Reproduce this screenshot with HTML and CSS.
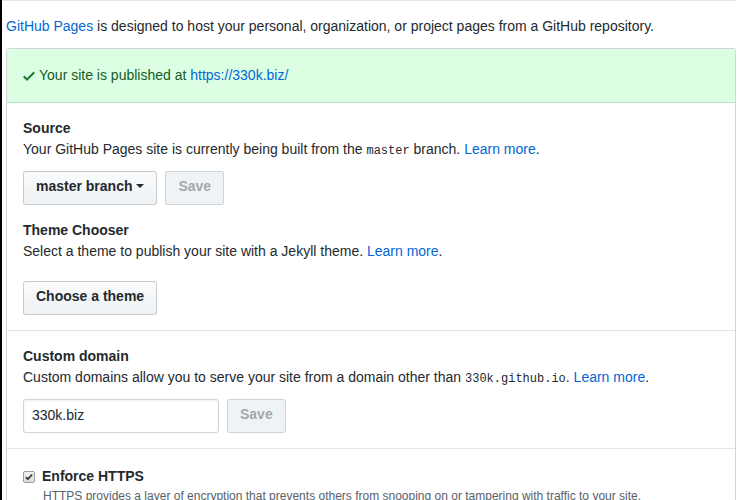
FILE: index.html
```html
<!DOCTYPE html>
<html lang="en">
<head>
<meta charset="utf-8">
<title>GitHub Pages</title>
<link rel="stylesheet" href="styles.css">
</head>
<body>
<div class="frame">
  <div class="wrap">
    <div class="topline"></div>
    <div class="main">
      <p class="intro"><a href="#">GitHub Pages</a> is designed to host your personal, organization, or project pages from a GitHub repository.</p>
      <div class="box">
        <div class="flash">
          <svg class="check" viewBox="0 0 12 16" width="12" height="16" aria-hidden="true"><path d="M12 5l-8 8-4-4 1.5-1.5L4 10l6.5-6.5L12 5z"/></svg>
          <span>Your site is published at <a href="#">https://330k.biz/</a></span>
        </div>
        <div class="row">
          <h3 class="heading">Source</h3>
          <p class="desc">Your GitHub Pages site is currently being built from the <code>master</code> branch. <a href="#">Learn more</a>.</p>
          <div class="actions">
            <button class="btn">master branch <span class="caret"></span></button>
            <button class="btn" disabled>Save</button>
          </div>
          <h3 class="heading heading-next">Theme Chooser</h3>
          <p class="desc">Select a theme to publish your site with a Jekyll theme. <a href="#">Learn more</a>.</p>
          <div class="actions actions-theme">
            <button class="btn">Choose a theme</button>
          </div>
        </div>
        <div class="row">
          <h3 class="heading">Custom domain</h3>
          <p class="desc">Custom domains allow you to serve your site from a domain other than <code>330k.github.io</code>. <a href="#">Learn more</a>.</p>
          <div class="actions">
            <input class="input" type="text" value="330k.biz">
            <button class="btn" disabled>Save</button>
          </div>
        </div>
        <div class="row row-last">
          <label class="check-line">
            <span class="checkbox"><svg viewBox="0 0 12 12" width="10" height="10" aria-hidden="true"><path d="M2.2 6.2l2.4 2.4 5.2-5.6" fill="none" stroke="#3b3b3b" stroke-width="2.2"/></svg></span>
            <span class="check-label">Enforce HTTPS</span>
          </label>
          <p class="note">HTTPS provides a layer of encryption that prevents others from snooping on or tampering with traffic to your site.</p>
        </div>
      </div>
    </div>
  </div>
</div>
</body>
</html>
```

FILE: styles.css
```css
* { box-sizing: border-box; }

html, body {
  margin: 0;
  padding: 0;
  background: #fff;
}

body {
  font-family: "Liberation Sans", Arial, Helvetica, sans-serif;
  font-size: 14px;
  line-height: 21px;
  color: #24292e;
  overflow: hidden;
}

a {
  color: #0366d6;
  text-decoration: none;
}

code {
  font-family: "Liberation Mono", "DejaVu Sans Mono", monospace;
  font-size: 12px;
  line-height: 1;
}

.frame {
  border-left: 2px solid #000;
  height: 500px;
}

.wrap {
  width: 734px;
}

.topline {
  border-top: 1px solid #e1e4e8;
}

.main {
  padding-left: 4px;
}

.intro {
  margin: 15px 0 11px;
}

.box {
  border: 1px solid #d1d5da;
  border-radius: 3px 3px 0 0;
  border-bottom: none;
}

.flash {
  display: flex;
  align-items: center;
  gap: 4px;
  padding: 16px;
  background: #dcffe4;
  color: #165c26;
  border-bottom: 1px solid #b9dfc2;
}

.check {
  fill: #1f7a34;
  flex: none;
}

.row {
  padding: 15px 16px;
  border-top: 1px solid #e1e4e8;
}

.flash + .row {
  border-top: none;
}

.heading {
  margin: 0;
  font-size: 14px;
  font-weight: bold;
  line-height: 21px;
}

.heading-next {
  margin-top: 15px;
}

.desc {
  margin: 0;
}

.actions {
  display: flex;
  align-items: center;
  gap: 8px;
  margin-top: 11px;
}

.actions-theme {
  margin-top: 19px;
}

.btn {
  font-family: inherit;
  font-size: 14px;
  font-weight: bold;
  line-height: 20px;
  padding: 4px 12px 8px;
  color: #24292e;
  background: linear-gradient(180deg, #fafbfc 0%, #eff3f6 90%);
  border: 1px solid rgba(27, 31, 35, 0.2);
  border-radius: 3px;
  white-space: nowrap;
  cursor: pointer;
}

.btn:disabled {
  color: rgba(36, 41, 46, 0.4);
  background: #eff3f6;
  border-color: rgba(27, 31, 35, 0.15);
  cursor: default;
}

.caret {
  display: inline-block;
  width: 0;
  height: 0;
  vertical-align: middle;
  border-top: 4px solid #24292e;
  border-left: 4px solid transparent;
  border-right: 4px solid transparent;
  margin-top: -2px;
}

.input {
  width: 196px;
  height: 34px;
  font-family: inherit;
  font-size: 14px;
  line-height: 20px;
  padding: 5px 8px 7px;
  color: #24292e;
  border: 1px solid #d1d5da;
  border-radius: 3px;
  box-shadow: inset 0 1px 2px rgba(27, 31, 35, 0.075);
  outline: none;
}

.row-last {
  padding-top: 17px;
}

.check-line {
  display: flex;
  align-items: center;
  gap: 7px;
}

.checkbox {
  display: inline-flex;
  align-items: center;
  justify-content: center;
  width: 12px;
  height: 12px;
  border: 1px solid #9c9c9c;
  border-radius: 2px;
  background: linear-gradient(180deg, #f2f2f2, #dedede);
  flex: none;
}

.check-label {
  font-weight: bold;
}

.note {
  margin: 0 0 0 20px;
  font-size: 12px;
  line-height: 18px;
  color: #586069;
}
```
